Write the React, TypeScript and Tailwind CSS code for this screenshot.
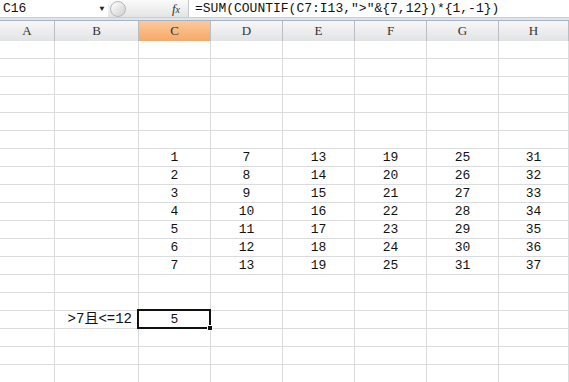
const cols = ['A', 'B', 'C', 'D', 'E', 'F', 'G', 'H']

function cellValue(row: number, col: number): string {
  // data block C7:H13
  if (row >= 7 && row <= 13 && col >= 2) {
    return String(row - 6 + (col - 2) * 6)
  }
  return ''
}

export default function App() {
  const rows = Array.from({ length: 19 }, (_, i) => i + 1)

  return (
    <div className="w-[569px] h-[382px] overflow-hidden bg-white font-['Liberation_Mono','Noto_Sans_CJK_SC',monospace] text-[12px] text-[#111]">
      {/* formula bar */}
      <div className="flex h-[21px] border-b border-[#a8b4c4] bg-gradient-to-b from-[#f4f6f9] to-[#dfe3ea]">
        <div className="flex items-center w-[96px] h-[18px] bg-white pl-[3px] text-[13px] border-b border-[#c8ced8]">
          C16
        </div>
        <div className="flex items-center justify-center w-[12px] h-[18px] bg-white text-[8px] text-[#222] border-b border-[#c8ced8]">
          ▼
        </div>
        <div className="flex items-center flex-1 max-w-[80px] h-[18px] pl-[2px] bg-gradient-to-b from-[#fbfbfb] to-[#e4e4e4] border-b border-[#c8ced8]">
          <div className="w-[16px] h-[16px] rounded-full border border-[#b7b7b7] bg-gradient-to-br from-[#ffffff] to-[#cfcfcf]" />
          <span className="ml-auto mr-[8px] font-['Liberation_Serif',serif] italic text-[13px] text-[#333]">
            f<span className="text-[10px]">x</span>
          </span>
        </div>
        <div className="flex items-center flex-1 h-[18px] bg-white border-l border-[#c4c9d0] border-b border-b-[#c8ced8] pl-[6px] text-[13px] whitespace-nowrap">
          =SUM(COUNTIF(C7:I13,"&gt;"&amp;{'{'}7,12{'}'})*{'{'}1,-1{'}'})
        </div>
      </div>

      {/* column headers */}
      <div className="grid grid-cols-[55px_84px_72px_72px_72px_72px_72px_70px] h-[20px] border-b border-[#9aa3ad]">
        {cols.map((c) => (
          <div
            key={c}
            className={`flex items-center justify-center border-r border-[#b9bec5] font-['Liberation_Serif','Noto_Sans_CJK_SC',serif] text-[13px] text-[#333] ${
              c === 'C'
                ? 'bg-gradient-to-b from-[#fbc99a] to-[#f6a868]'
                : 'bg-gradient-to-b from-[#f7f7f7] to-[#e2e3e5]'
            }`}
          >
            {c}
          </div>
        ))}
      </div>

      {/* cells */}
      <div className="grid grid-cols-[55px_84px_72px_72px_72px_72px_72px_70px]">
        {rows.map((r) =>
          cols.map((c, ci) => {
            const isActive = r === 16 && ci === 2
            const label = r === 16 && ci === 1
            return (
              <div
                key={`${c}${r}`}
                className={`relative flex items-center h-[18px] border-r border-b border-[#d9dbde] ${
                  label ? 'justify-end pr-[6px]' : 'justify-center'
                } ${isActive ? 'z-10' : ''}`}
              >
                {label && (
                  <span className="text-[14px] whitespace-nowrap">
                    &gt;7且&lt;=12
                  </span>
                )}
                {isActive && (
                  <>
                    <div className="absolute left-[-2px] top-[-2px] right-[-1px] bottom-[-1px] border-2 border-[#111]" />
                    <div className="absolute right-[-3px] bottom-[-3px] w-[6px] h-[6px] bg-[#111] border border-white" />
                    <span className="text-[13px]">5</span>
                  </>
                )}
                {!isActive && !label && <span className="text-[13px]">{cellValue(r, ci)}</span>}
              </div>
            )
          })
        )}
      </div>
    </div>
  )
}
